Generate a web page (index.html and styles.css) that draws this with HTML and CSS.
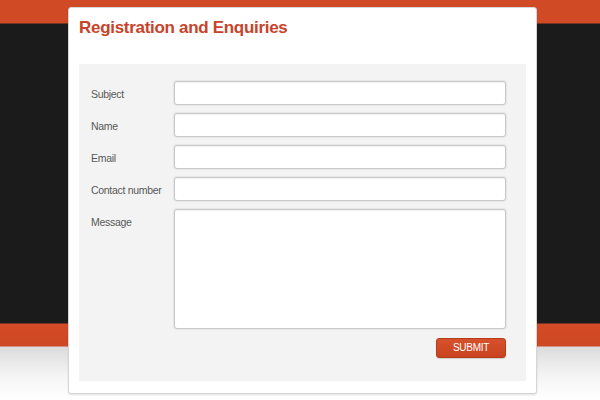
FILE: index.html
```html
<!DOCTYPE html>
<html>
<head>
<meta charset="utf-8">
<link rel="stylesheet" href="styles.css">
</head>
<body>
<div class="card">
  <h1 class="title">Registration and Enquiries</h1>
  <form class="panel">
    <div class="row">
      <label class="label">Subject</label>
      <input class="field" type="text">
    </div>
    <div class="row">
      <label class="label">Name</label>
      <input class="field" type="text">
    </div>
    <div class="row">
      <label class="label">Email</label>
      <input class="field" type="text">
    </div>
    <div class="row">
      <label class="label">Contact number</label>
      <input class="field" type="text">
    </div>
    <div class="row">
      <label class="label">Message</label>
      <textarea class="field area"></textarea>
    </div>
    <div class="actions">
      <button class="submit" type="button">SUBMIT</button>
    </div>
  </form>
</div>
</body>
</html>
```
FILE: styles.css
```css
html, body {
  margin: 0;
  padding: 0;
  height: 400px;
  overflow: hidden;
}
body {
  font-family: "Liberation Sans", Arial, sans-serif;
  background:
    linear-gradient(to bottom,
      #d04a25 0px, #d04a25 23px,
      #1b1b1b 24px, #1b1b1b 323px,
      #d24b26 324px, #cf4824 346px,
      #dcdcdc 347px, #f4f4f4 375px, #ffffff 400px);
  padding-top: 7px;
  box-sizing: border-box;
}
.card {
  margin-left: 68px;
  width: 469px;
  height: 387px;
  box-sizing: border-box;
  background: #fff;
  border: 1px solid #d6d6d6;
  border-radius: 3px;
  box-shadow: 0 1px 2px rgba(0,0,0,0.12);
  padding: 10px 10px 0 10px;
}
.title {
  margin: 0 0 26px 0;
  font-size: 17px;
  line-height: 20px;
  letter-spacing: -0.3px;
  font-weight: bold;
  color: #c8432a;
}
.panel {
  background: #f3f3f3;
  padding: 17px 20px 23px 12px;
  display: flex;
  flex-direction: column;
  gap: 8px;
}
.row {
  display: flex;
  align-items: flex-start;
}
.label {
  width: 83px;
  flex: none;
  font-size: 10.5px;
  letter-spacing: -0.3px;
  line-height: 21px;
  padding-top: 3px;
  color: #585858;
}
.field {
  flex: 1;
  height: 24px;
  box-sizing: border-box;
  margin: 0;
  border: 1px solid #c9c9c9;
  border-radius: 3px;
  background: #fff;
  box-shadow: 0 0 0 1px #e6e6e6, inset 0 1px 1px rgba(0,0,0,0.06);
  outline: none;
  font-family: inherit;
  resize: none;
}
.area {
  height: 120px;
}
.actions {
  display: flex;
  justify-content: flex-end;
  padding-top: 1px;
}
.submit {
  width: 70px;
  height: 20px;
  margin: 0;
  padding: 0;
  border: 1px solid #b23d1d;
  border-radius: 3px;
  background: linear-gradient(to bottom, #d7512c, #c9431f);
  color: #fff;
  font-family: inherit;
  font-size: 10px;
  letter-spacing: -0.3px;
  line-height: 18px;
  box-shadow: 0 1px 1px rgba(0,0,0,0.15);
}
```
